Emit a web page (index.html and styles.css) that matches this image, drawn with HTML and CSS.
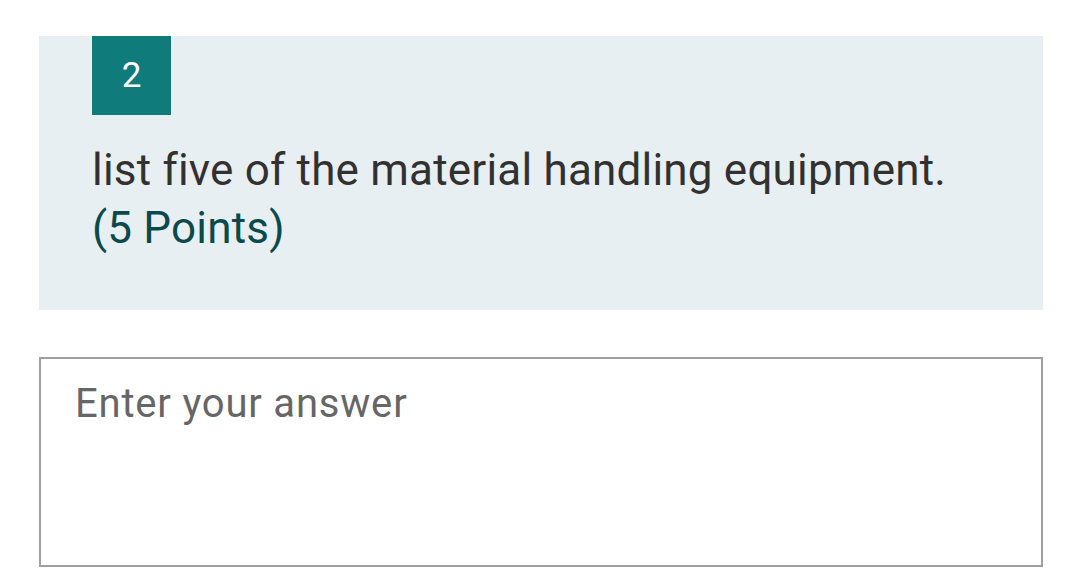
FILE: index.html
```html
<!DOCTYPE html>
<html>
<head>
<meta charset="utf-8">
<link rel="stylesheet" href="styles.css">
</head>
<body>
<div class="page">
  <section class="question">
    <div class="badge">2</div>
    <div class="title">
      <span class="text">list five of the material handling equipment.</span>
      <span class="points">(5 Points)</span>
    </div>
  </section>
  <div class="answer">
    <div class="placeholder">Enter your answer</div>
  </div>
</div>
</body>
</html>
```

FILE: styles.css
```css
html, body {
  margin: 0;
  padding: 0;
  background: #ffffff;
}
body {
  font-family: Roboto, "Liberation Sans", sans-serif;
}
.page {
  padding: 36px 37px 0 39px;
  display: flex;
  flex-direction: column;
}
.question {
  background: #e7eff2;
  height: 274px;
  padding: 0 53px;
  box-sizing: border-box;
}
.badge {
  width: 79px;
  height: 79px;
  background: #0f7b7b;
  color: #ffffff;
  font-size: 35px;
  display: flex;
  align-items: center;
  justify-content: center;
}
.title {
  margin-top: 26px;
  display: flex;
  flex-direction: column;
  font-size: 44px;
  line-height: 58px;
  letter-spacing: 0.2px;
}
.text {
  color: #323130;
}
.points {
  color: #0b4a4c;
}
.answer {
  margin-top: 47px;
  height: 210px;
  border: 2px solid #a0a0a0;
  box-sizing: border-box;
  padding: 20px 34px;
}
.placeholder {
  font-size: 40px;
  color: #666666;
  line-height: 50px;
  letter-spacing: 0.8px;
}
```
